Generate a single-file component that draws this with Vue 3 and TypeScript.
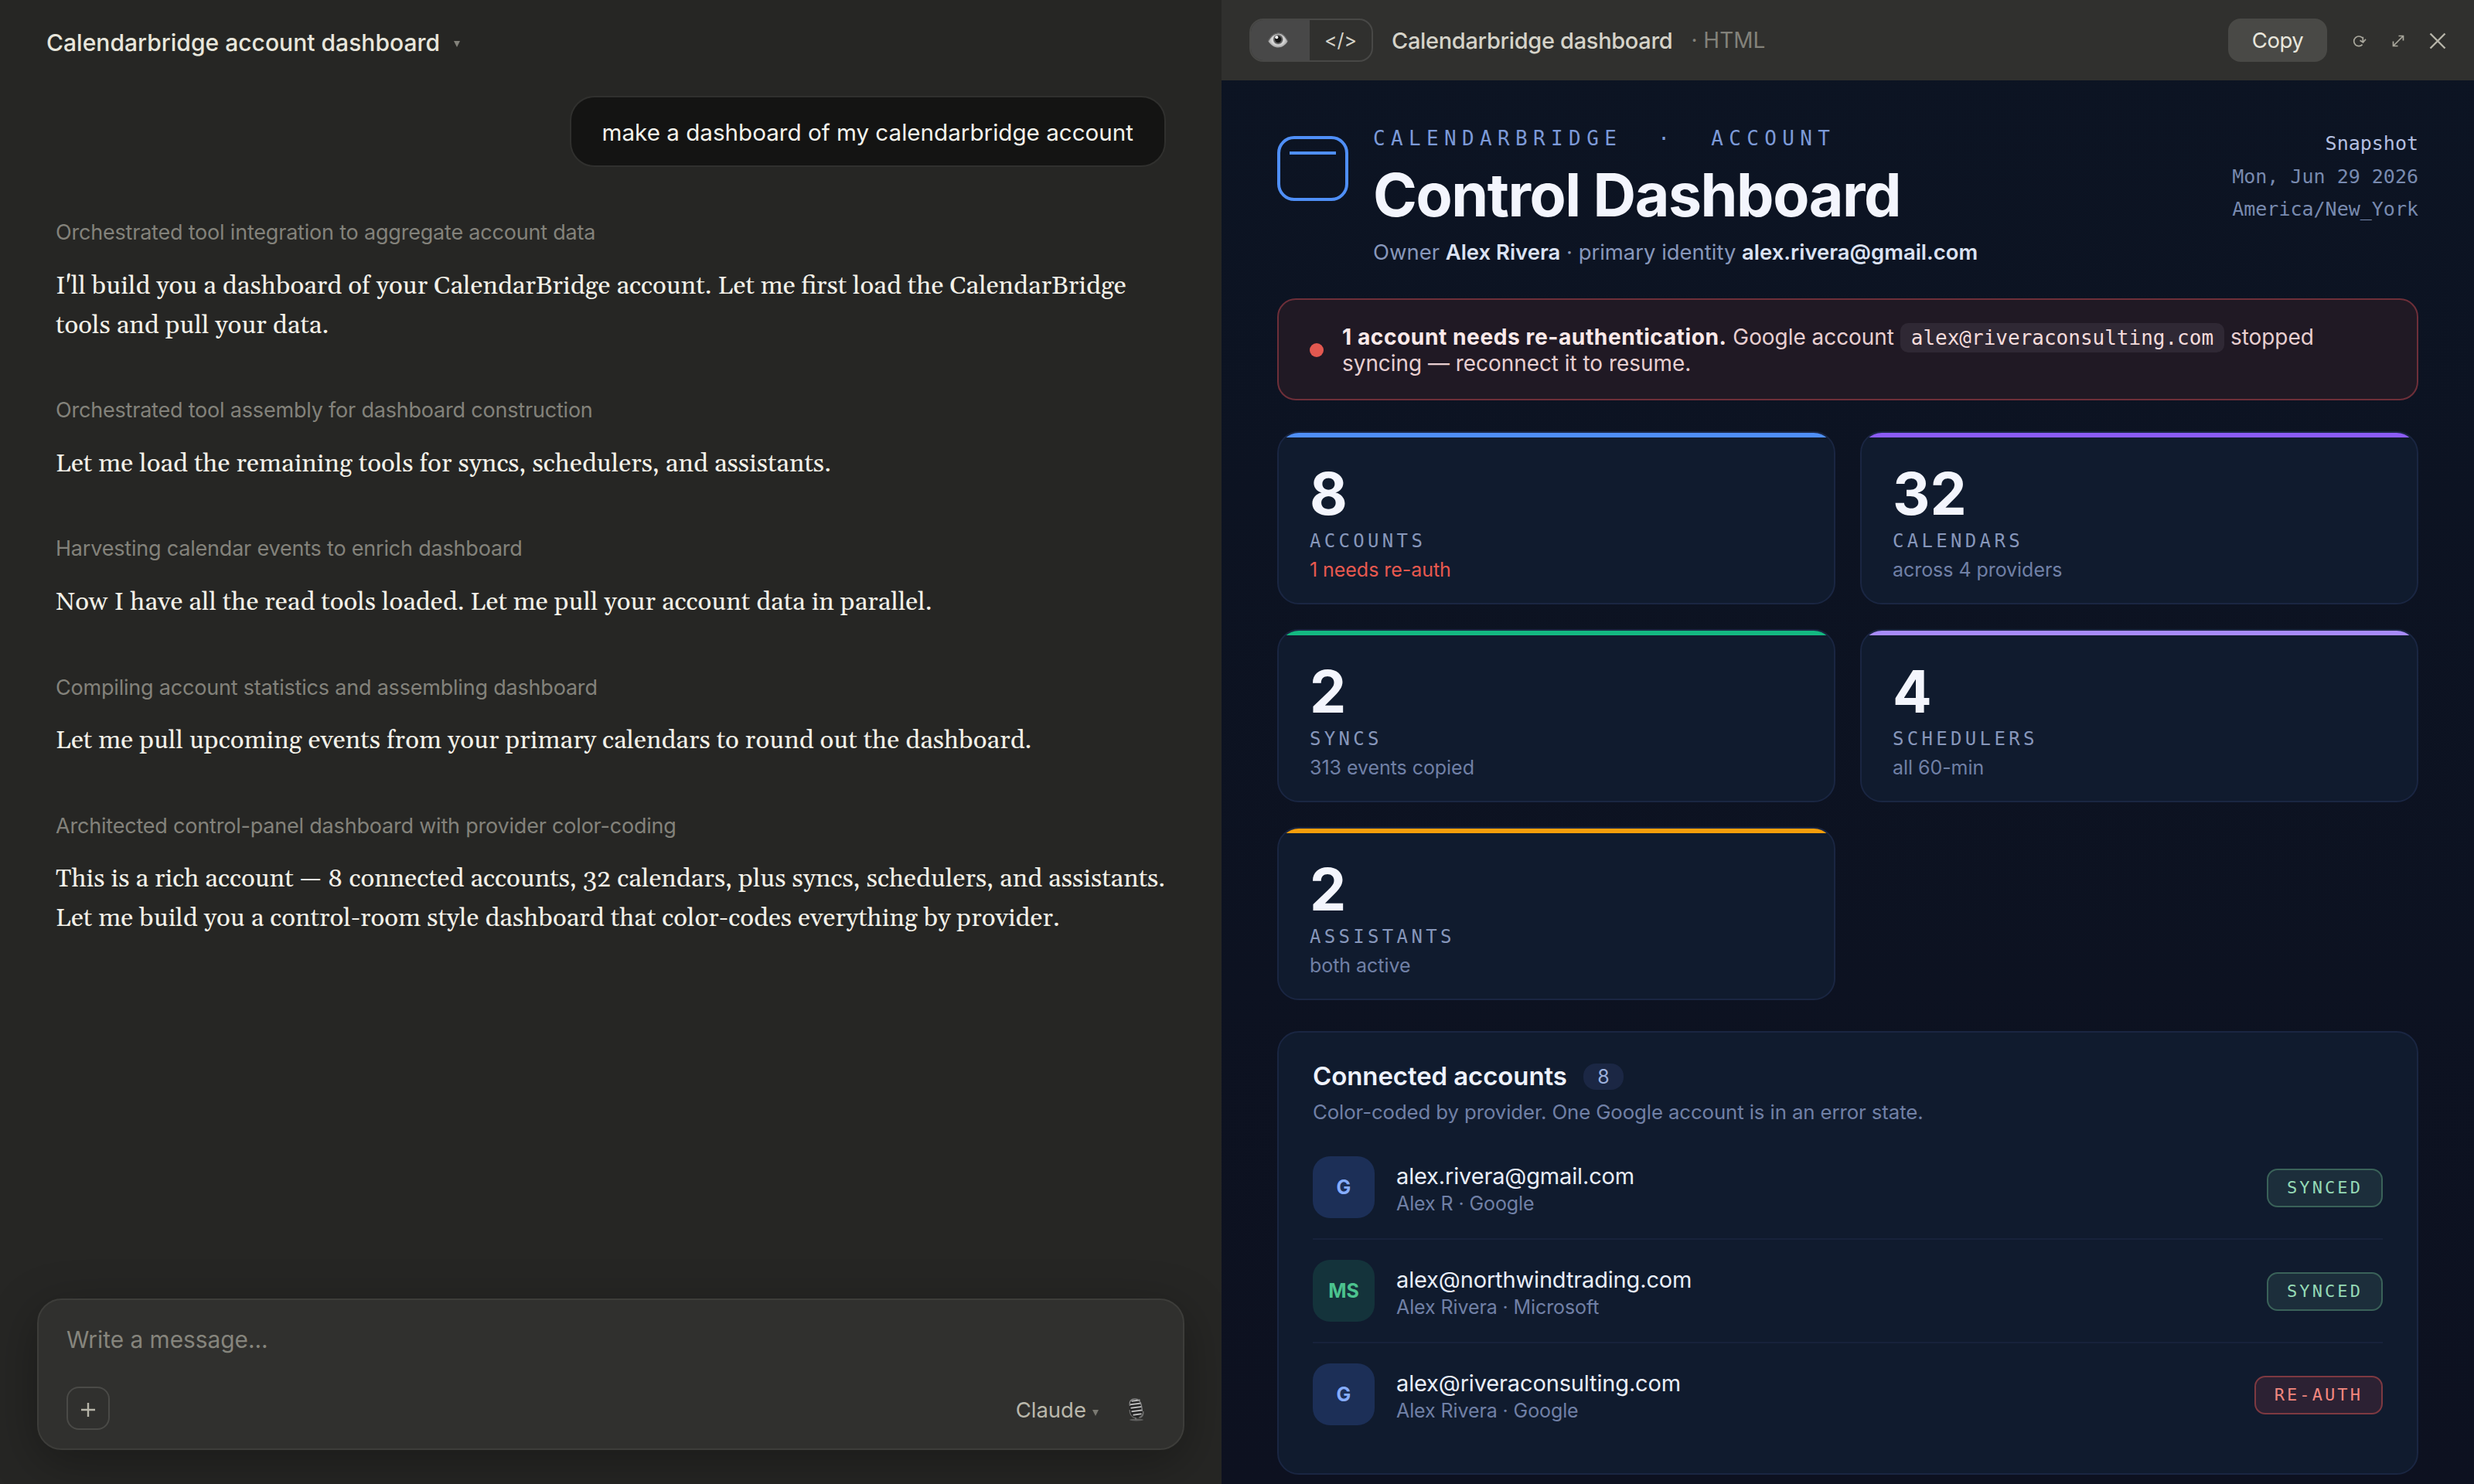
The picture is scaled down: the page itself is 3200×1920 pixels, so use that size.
<script setup lang="ts">
interface Step { label: string; lines: string[] }
interface Stat { value: string; label: string; note: string; color: string; alert?: boolean }
interface Account { mark: string; kind: string; email: string; note: string; status: string; ok: boolean }

const steps: Step[] = [
  { label: 'Orchestrated tool integration to aggregate account data', lines: ["I'll build you a dashboard of your CalendarBridge account. Let me first load the CalendarBridge", 'tools and pull your data.'] },
  { label: 'Orchestrated tool assembly for dashboard construction', lines: ['Let me load the remaining tools for syncs, schedulers, and assistants.'] },
  { label: 'Harvesting calendar events to enrich dashboard', lines: ['Now I have all the read tools loaded. Let me pull your account data in parallel.'] },
  { label: 'Compiling account statistics and assembling dashboard', lines: ['Let me pull upcoming events from your primary calendars to round out the dashboard.'] },
  { label: 'Architected control-panel dashboard with provider color-coding', lines: ['This is a rich account — 8 connected accounts, 32 calendars, plus syncs, schedulers, and assistants.', 'Let me build you a control-room style dashboard that color-codes everything by provider.'] },
]

const stats: Stat[] = [
  { value: '8', label: 'ACCOUNTS', note: '1 needs re-auth', color: '#4f8ff7', alert: true },
  { value: '32', label: 'CALENDARS', note: 'across 4 providers', color: '#8b5cf6' },
  { value: '2', label: 'SYNCS', note: '313 events copied', color: '#14b881' },
  { value: '4', label: 'SCHEDULERS', note: 'all 60-min', color: '#a78bfa' },
  { value: '2', label: 'ASSISTANTS', note: 'both active', color: '#f59e0b' },
]

const accounts: Account[] = [
  { mark: 'G', kind: 'google', email: 'alex.rivera@gmail.com', note: 'Alex R · Google', status: 'SYNCED', ok: true },
  { mark: 'MS', kind: 'microsoft', email: 'alex@northwindtrading.com', note: 'Alex Rivera · Microsoft', status: 'SYNCED', ok: true },
  { mark: 'G', kind: 'google', email: 'alex@riveraconsulting.com', note: 'Alex Rivera · Google', status: 'RE-AUTH', ok: false },
]
</script>

<template>
  <div class="screen">
    <section class="chat">
      <header class="chat-head">
        <span class="chat-title">Calendarbridge account dashboard</span>
        <svg class="caret" width="8" height="8" viewBox="0 0 8 8"><path d="M0 0h8L4 8z" fill="#83827b" /></svg>
      </header>
      <div class="bubble">make a dashboard of my calendarbridge account</div>
      <div class="steps">
        <article v-for="s in steps" :key="s.label" class="step">
          <div class="step-label">{{ s.label }}</div>
          <p class="step-text"><span v-for="l in s.lines" :key="l" class="line">{{ l }}</span></p>
        </article>
      </div>
      <div class="composer">
        <div class="placeholder">Write a message...</div>
        <div class="composer-row">
          <button class="plus" aria-label="Add"><svg width="20" height="20" viewBox="0 0 20 20"><path d="M10 1v18M1 10h18" stroke="#b7b5a9" stroke-width="2.4" /></svg></button>
          <div class="composer-right">
            <span class="model">Claude</span>
            <svg class="model-caret" width="8" height="8" viewBox="0 0 8 8"><path d="M0 0h8L4 8z" fill="#7a7972" /></svg>
            <svg class="mic" width="22" height="30" viewBox="0 0 22 30">
              <ellipse cx="11" cy="28" rx="9" ry="1.5" fill="#5f5f5e" />
              <path d="M2.500 15c0 5 2 9 7 10l1 3M19.500 17c.5 4-1 7-5 8" fill="none" stroke="#6e6e6d" stroke-width="2" />
              <rect x="2.500" y="0.800" width="15.500" height="24" rx="7" transform="rotate(-8 10 13)" fill="#202020" />
              <path d="M4.500 3.800l11-1.300M3 8.300l14-1.800M3.500 12.800l14-1.800M4.500 17.300l13.500-1.800M6.500 21.800l11-1.600" stroke="#b9b9b9" stroke-width="1.900" />
              <path d="M2.500 10C1 3 5 .8 9 .8s7 2 8.500 9l1 7" fill="none" stroke="#8b8b8b" stroke-width="1.300" />
            </svg>
          </div>
        </div>
      </div>
    </section>

    <section class="artifact">
      <header class="toolbar">
        <div class="toggle">
          <span class="tab tab-on">
            <svg width="26" height="20" viewBox="0 0 26 20">
              <defs><radialGradient id="ball" cx=".5" cy=".5" r=".6"><stop offset=".4" stop-color="#ececec" /><stop offset="1" stop-color="#7e7e7e" /></radialGradient></defs>
              <path d="M0 11C4 4 8 .5 13.500.500S22 4 26 11c-3.500 5.500-7.500 8.500-12.500 8.500S4 17 0 11z" fill="url(#ball)" />
              <path d="M0 11.500C4 4.500 8 1 13.500 1S22 4.500 26 11.500" fill="none" stroke="#5c5c5c" stroke-width="1.200" />
              <circle cx="13.200" cy="9" r="6.800" fill="#a8a8a8" />
              <circle cx="13.200" cy="9" r="6" fill="#5c5c5c" />
              <circle cx="13.200" cy="9" r="4.200" fill="#161616" />
              <circle cx="11.300" cy="6.200" r="2" fill="#fff" />
            </svg>
          </span>
          <span class="tab">&lt;/&gt;</span>
        </div>
        <span class="doc-title">Calendarbridge dashboard</span>
        <span class="doc-kind">· HTML</span>
        <button class="copy-btn">Copy</button>
        <svg class="reload" width="20" height="18" viewBox="0 0 20 18"><path d="M14.600 4A6.300 6.300 0 1 0 14.600 12.600M15.300 2.800v6M11.500 7.300l4 2.500 3.500-4" fill="none" stroke="#a9a79c" stroke-width="1.700" /></svg>
        <svg class="expand" width="16" height="16" viewBox="0 0 16 16"><path d="M2 14L14 2M8.500 1.500H14.500V7.500M1.500 8.500V14.500H7.500" fill="none" stroke="#a9a79c" stroke-width="1.700" /></svg>
        <svg class="close" width="22" height="22" viewBox="0 0 22 22"><path d="M1.500 1.500l19 19M20.500 1.500l-19 19" stroke="#b7b5a9" stroke-width="2.400" /></svg>
      </header>

      <main class="board">
        <div class="board-head">
          <div class="logo"><i></i></div>
          <div class="titles">
            <div class="eyebrow">CALENDARBRIDGE&nbsp; · &nbsp;ACCOUNT</div>
            <h1>Control Dashboard</h1>
            <div class="owner">Owner <b>Alex Rivera</b> · primary identity <b>alex.rivera@gmail.com</b></div>
          </div>
          <div class="snapshot"><span class="snap-title">Snapshot</span><br>Mon, Jun 29 2026<br>America/New_York</div>
        </div>

        <div class="alert">
          <span class="dot"></span>
          <p><b>1 account needs re-authentication.</b> Google account <code>alex@riveraconsulting.com</code> stopped<br>syncing — reconnect it to resume.</p>
        </div>

        <div class="stats">
          <div v-for="s in stats" :key="s.label" class="stat">
            <div class="stripe" :style="{ background: s.color }"></div>
            <div class="value">{{ s.value }}</div>
            <div class="stat-label">{{ s.label }}</div>
            <div class="note" :class="{ bad: s.alert }">{{ s.note }}</div>
          </div>
        </div>

        <div class="panel">
          <div class="panel-head"><span class="panel-title">Connected accounts</span><span class="count">8</span></div>
          <div class="panel-note">Color-coded by provider. One Google account is in an error state.</div>
          <div v-for="a in accounts" :key="a.email" class="account">
            <span class="mark" :class="a.kind">{{ a.mark }}</span>
            <div class="ident">
              <div class="email">{{ a.email }}</div>
              <div class="who">{{ a.note }}</div>
            </div>
            <span class="badge" :class="a.ok ? 'good' : 'error'">{{ a.status }}</span>
          </div>
        </div>
      </main>
    </section>
  </div>
</template>

<style>
body { margin: 0; background: #262624; overflow: hidden; }
</style>

<style scoped>
* { box-sizing: border-box; }
.screen { display: flex; width: 3200px; height: 1920px; overflow: hidden; font-family: Inter, "Liberation Sans", sans-serif; white-space: nowrap; }
button { font: inherit; margin: 0; padding: 0; border: 0; background: none; }
svg { display: block; flex: none; }
p, h1 { margin: 0; }

.chat { width: 1580px; flex: none; display: flex; flex-direction: column; background: #262624; padding: 0 48px 44px; }
.chat-head { height: 124px; padding: 0 0 14px 12px; display: flex; align-items: center; }
.chat-title { font-size: 30px; letter-spacing: .03px; font-weight: 500; color: #e8e6dc; }
.caret { margin: 4px 0 0 18px; }
.bubble { align-self: flex-end; margin-right: 24px; height: 92px; padding: 23px 40px 21px; line-height: 44px; border: 2px solid #30302e; border-radius: 32px; background: #141413; color: #f5f4ed; font-size: 29.6px; }
.steps { margin: 65px 0 0 24px; display: flex; flex-direction: column; gap: 65.4px; }
.step-label { height: 40px; line-height: 40px; font-size: 27px; letter-spacing: -.2px; color: #83827b; }
.step-text { margin: 23.6px 0 -1px; font-family: Gelasio, Georgia, "Liberation Serif", serif; font-size: 33px; line-height: 51.15px; font-variant-numeric: oldstyle-nums; color: #f2f0e8; }
.line { display: block; }
.composer { margin-top: auto; height: 196px; padding: 31px 48px 24px 36px; display: flex; flex-direction: column; justify-content: space-between; background: #30302e; border: 2px solid #3d3d3a; border-radius: 32px; box-shadow: 0 16px 64px rgba(0, 0, 0, .3); }
.placeholder { height: 40px; line-height: 40px; font-size: 29.8px; color: #86857d; }
.composer-row { display: flex; justify-content: space-between; align-items: center; }
.plus { width: 56px; height: 56px; display: grid; place-items: center; padding-top: 3px; border: 2px solid #4a4a47; border-radius: 16px; }
.composer-right { display: flex; align-items: center; padding-top: 3px; }
.model { font-size: 27.500px; color: #b9b7ab; }
.model-caret { margin: 8px 38px 0 8px; }
.mic { margin-right: 1px; }

.artifact { flex: 1; display: flex; flex-direction: column; background: linear-gradient(#0c1423, #0d1120); }
.toolbar { height: 104px; flex: none; display: flex; align-items: center; padding: 0 36px; background: #30302e; }
.toggle { width: 160px; height: 56px; display: flex; border: 2px solid #484846; border-radius: 18px; overflow: hidden; }
.tab { flex: 1; display: grid; place-items: center; color: #d5d3ca; font-size: 25px; }
.tab-on { flex: 0 0 76px; background: #484848; padding-right: 6px; }
.doc-title { margin-left: 24px; font-size: 29px; letter-spacing: -.33px; font-weight: 500; color: #d5d3c9; }
.doc-kind { margin-left: 24px; font-size: 28px; color: #83827b; }
.copy-btn { margin-left: auto; width: 128px; height: 56px; border-radius: 16px; background: #494946; color: #e8e6dc; font-size: 27.500px; letter-spacing: -.5px; }
.reload { margin: 4px 0 0 31px; }
.expand { margin: 2px 0 0 33px; }
.close { margin: 2px 0 0 32px; }

.board { padding: 56px 72px 12px; flex: 1; }
.board-head { display: flex; height: 226px; }
.logo { width: 92px; height: 84px; margin: 16px 32px 0 0; padding: 16px 12px; border: 4px solid #4f8ff7; border-radius: 22px; }
.logo i { display: block; height: 4px; background: #4f8ff7; }
.titles { padding-top: 4px; }
.eyebrow { height: 30px; line-height: 30px; font-family: "DejaVu Sans Mono", monospace; font-size: 26px; letter-spacing: .283em; color: #7c9ad8; }
h1 { margin-top: 15.600px; height: 84px; line-height: 84px; font-size: 77px; letter-spacing: -1.450px; font-weight: 700; color: #f3f5fd; }
.owner { margin-top: 15.400px; line-height: 34px; font-size: 27.450px; color: #8797bb; }
.owner b { font-weight: 600; color: #dbe2f3; }
.snapshot { margin-left: auto; padding-top: 5px; text-align: right; font-family: "DejaVu Sans Mono", monospace; font-size: 25px; line-height: 42.500px; color: #788aaf; }
.snap-title { color: #b4bfe0; }

.alert { display: flex; align-items: center; gap: 24px; height: 132px; padding: 31px 40px 29px; border: 2px solid #6e2f39; border-radius: 24px; background: #201924; color: #e8cfd1; font-size: 27.900px; line-height: 34px; }
.alert b { font-size: 28.200px; font-weight: 700; letter-spacing: .53px; color: #fbe9e9; }
.dot { width: 18px; height: 18px; border-radius: 50%; background: #e25850; }
.alert code { padding: 4px 14px; border-radius: 10px; background: #2f2834; font: 26px/0 "DejaVu Sans Mono", monospace; color: #f5dcdc; }

.stats { margin-top: 40px; display: grid; grid-template-columns: 1fr 1fr; gap: 32px; }
.stat { height: 224px; overflow: hidden; border: 2px solid #1a2642; border-radius: 28px; background: #101b2e; }
.stripe { height: 6px; margin-bottom: 34.700px; }
.value, .stat-label, .note { padding-left: 40px; }
.value { height: 76px; line-height: 76px; font-size: 75px; font-weight: 700; color: #f3f5fd; }
.stat-label { margin-top: 8px; height: 30px; line-height: 30px; font-family: "DejaVu Sans Mono", monospace; font-size: 24px; letter-spacing: .18em; color: #8797bb; }
.note { margin-top: 6.200px; line-height: 32px; font-size: 25px; letter-spacing: -.05px; color: #7080a6; }
.bad { color: #e8594f; }

.panel { margin-top: 40px; height: 574px; padding: 36px 44px; border: 2px solid #1a2642; border-radius: 28px; background: #101b2e; }
.panel-head { display: flex; align-items: center; height: 40px; }
.panel-title { font-size: 33px; letter-spacing: -.1px; font-weight: 600; color: #eef2fc; }
.count { margin: 2px 0 0 21px; width: 52px; height: 34px; line-height: 34px; text-align: center; border-radius: 16px; background: #1b2744; color: #9db0dc; font-size: 25px; }
.panel-note { margin: 10.400px 0 13.600px; height: 34px; line-height: 34px; font-size: 25.800px; letter-spacing: -.11px; color: #7080a6; }
.account { display: flex; align-items: center; height: 132px; }
.account + .account { height: 134px; border-top: 2px solid #17223b; }
.mark { width: 80px; height: 80px; margin-right: 28px; border-radius: 22px; display: grid; place-items: center; font-size: 25px; font-weight: 700; }
.google { background: #1c2f57; color: #86adff; }
.microsoft { background: #14333b; color: #4cc38f; }
.ident { height: 80px; padding-top: 8px; }
.email { height: 35px; line-height: 36px; font-size: 29px; letter-spacing: -.15px; color: #e9eef9; }
.who { line-height: 36px; font-size: 25px; letter-spacing: -.1px; color: #7080a6; }
.badge { margin: 2px 0 0 auto; height: 50px; padding: 0 24px; line-height: 46px; border: 2px solid; border-radius: 14px; font-family: "DejaVu Sans Mono", monospace; font-size: 22px; letter-spacing: .14em; }
.good { background: #1c2e3b; border-color: #3a6259; color: #95dab6; }
.error { background: #2c2133; border-color: #7d3941; color: #f2877f; }
</style>
